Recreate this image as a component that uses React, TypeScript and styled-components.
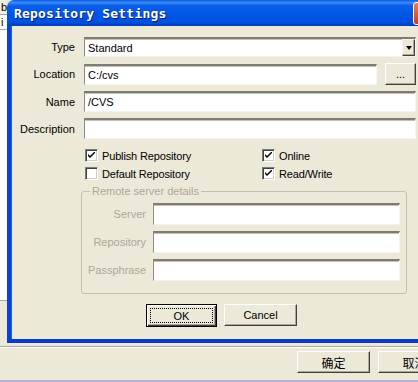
import styled, { createGlobalStyle } from 'styled-components'

const Global = createGlobalStyle`
  html, body { margin: 0; padding: 0; }
  body {
    width: 418px;
    height: 382px;
    overflow: hidden;
    background: #ece9d8;
    font-family: "Liberation Sans", Arial, sans-serif;
    font-size: 11px;
    color: #000;
  }
`

const Screen = styled.div`
  display: flex;
  flex-direction: column;
  width: 418px;
  height: 382px;
  overflow: hidden;
`

const TopArea = styled.div`
  display: flex;
  height: 343px;
  flex-shrink: 0;
`

const LeftStrip = styled.div`
  width: 7px;
  flex-shrink: 0;
  display: flex;
  flex-direction: column;
  overflow: hidden;
  font-size: 11px;
`

const StripLine = styled.div<{ $h: number; $bg: string }>`
  height: ${(p) => p.$h}px;
  background: ${(p) => p.$bg};
  border-bottom: 1px solid #aca899;
  line-height: ${(p) => p.$h}px;
  padding-left: 1px;
  white-space: nowrap;
`

const Dialog = styled.div`
  width: 430px;
  flex-shrink: 0;
  display: flex;
  flex-direction: column;
`

const TitleBar = styled.div`
  height: 26px;
  flex-shrink: 0;
  display: flex;
  align-items: center;
  justify-content: space-between;
  padding: 0 0 0 7px;
  border-radius: 7px 7px 0 0;
  background: linear-gradient(
    to bottom,
    #0a5ce4 0%,
    #3a8cf8 10%,
    #0a5fe8 22%,
    #0055e5 55%,
    #0051e0 85%,
    #003cb4 100%
  );
`

const Title = styled.span`
  font-family: "DejaVu Sans Mono", "Liberation Mono", monospace;
  font-weight: bold;
  font-size: 13px;
  color: #fff;
  letter-spacing: 0.2px;
  text-shadow: 1px 1px 0 #0a1e6e;
  margin-top: 1px;
`

const CloseBtn = styled.div`
  width: 21px;
  height: 21px;
  margin-right: 1px;
  border: 1px solid #fff;
  border-radius: 3px;
  background: linear-gradient(to bottom, #e7805c, #c6401e);
  flex-shrink: 0;
`

const Frame = styled.div`
  flex: 1;
  display: flex;
  flex-direction: column;
  background: #ece9d8;
  border-left: 4px solid #0841d6;
  border-right: 4px solid #0841d6;
  border-bottom: 4px solid #0a3cc8;
  box-shadow: inset 1px 0 0 #1a5ef0;
  padding: 11px 17px 0 0;
`

const FormGrid = styled.div`
  display: grid;
  grid-template-columns: 64px 1fr;
  column-gap: 9px;
  row-gap: 6px;
  align-items: center;
`

const Label = styled.label<{ $disabled?: boolean }>`
  text-align: right;
  white-space: nowrap;
  color: ${(p) => (p.$disabled ? '#aca899' : '#000')};
`

const Field = styled.div<{ $h?: number }>`
  height: ${(p) => p.$h ?? 21}px;
  box-sizing: border-box;
  background: #fff;
  border-style: solid;
  border-width: 2px 1px 1px 1px;
  border-color: #7f7d72 #f7f6f0 #f4f3ee #8e8c80;
  box-shadow: inset 0 1px 0 #c4c1b3;
  display: flex;
  align-items: center;
  padding: 0 3px;
  min-width: 0;
  flex: 1;
`

const SelectBox = styled(Field)`
  padding-right: 0;
  justify-content: space-between;
`

const DropBtn = styled.div`
  width: 13px;
  height: 17px;
  box-sizing: border-box;
  background: #ece9d8;
  border: 1px solid;
  border-color: #f4f3ee #404040 #404040 #f4f3ee;
  box-shadow: inset -1px -1px 0 #aca899;
  display: flex;
  align-items: center;
  justify-content: center;
`

const Arrow = styled.div`
  width: 0;
  height: 0;
  border-left: 3.5px solid transparent;
  border-right: 3.5px solid transparent;
  border-top: 4px solid #000;
`

const Row = styled.div`
  display: flex;
  align-items: center;
  gap: 8px;
`

const Button = styled.button<{ $w: number; $default?: boolean; $cjk?: boolean }>`
  width: ${(p) => p.$w}px;
  height: ${(p) => (p.$default ? 23 : 22)}px;
  box-sizing: border-box;
  padding: 0;
  background: #ece9d8;
  font-family: "Liberation Sans", Arial, "Noto Sans CJK SC", sans-serif;
  font-size: ${(p) => (p.$cjk ? 12 : 11)}px;
  color: #000;
  border: 1px solid;
  border-color: ${(p) => (p.$default ? '#000' : '#fff #404040 #404040 #fff')};
  box-shadow: ${(p) =>
    p.$default
      ? 'inset 1px 1px 0 #fff, inset -1px -1px 0 #404040, inset -2px -2px 0 #aca899'
      : 'inset -1px -1px 0 #aca899'};
  display: flex;
  align-items: center;
  justify-content: center;
  flex-shrink: 0;
`

const FocusRect = styled.span`
  border: 1px dotted #000;
  width: calc(100% - 8px);
  height: 13px;
  display: flex;
  align-items: center;
  justify-content: center;
`

const CheckGrid = styled.div`
  display: grid;
  grid-template-columns: 177px auto;
  row-gap: 5px;
  margin: 10px 0 0 74px;
  letter-spacing: -0.15px;
`

const CheckItem = styled.div`
  display: flex;
  align-items: center;
  gap: 4px;
  height: 13px;
  white-space: nowrap;
`

const Box = styled.span`
  width: 13px;
  height: 13px;
  box-sizing: border-box;
  background: #fff;
  border: 1px solid;
  border-color: #7f7d72 #fff #fff #7f7d72;
  box-shadow: inset 1px 1px 0 #404040, inset -1px -1px 0 #d4d0c8;
  display: flex;
  align-items: center;
  justify-content: center;
  flex-shrink: 0;
`

const GroupBox = styled.fieldset`
  margin: 5px 0 0 70px;
  width: 326px;
  box-sizing: border-box;
  border: 1px solid #c4c1b0;
  border-radius: 3px;
  padding: 5px 6px 12px 6px;
  min-width: 0;
`

const Legend = styled.legend`
  color: #aca899;
  padding: 0 2px;
  margin-left: 2px;
  line-height: 13px;
`

const GroupGrid = styled.div`
  display: grid;
  grid-template-columns: 58px 1fr;
  column-gap: 7px;
  row-gap: 6px;
  align-items: center;
`

const ButtonRow = styled.div`
  display: flex;
  gap: 7px;
  margin: 10px 0 0 135px;
`

const Footer = styled.div`
  flex: 1;
  display: flex;
  flex-direction: column;
  padding-top: 3px;
  border-bottom: 2px solid #b3b3de;
`

const FooterButtons = styled.div`
  flex: 1;
  display: flex;
  gap: 8px;
  padding: 4px 0 0 297px;
  border-top: 1px solid #aca899;
  box-shadow: inset 0 1px 0 #fff;
`

const Check = () => (
  <svg width="7" height="7" viewBox="0 0 7 7">
    <path d="M0 2 L0 4 L2 6 L7 1 L7 -1 L2 4 Z" fill="#000" />
  </svg>
)

function CheckBox({ checked, label }: { checked: boolean; label: string }) {
  return (
    <CheckItem>
      <Box>{checked && <Check />}</Box>
      <span>{label}</span>
    </CheckItem>
  )
}

export default function App() {
  return (
    <Screen>
      <Global />
      <TopArea>
        <LeftStrip>
          <StripLine $h={14} $bg="#f1efe2">b</StripLine>
          <StripLine $h={14} $bg="#fff">i</StripLine>
          <StripLine $h={270} $bg="#fff" />
        </LeftStrip>
        <Dialog>
          <TitleBar>
            <Title>Repository Settings</Title>
            <CloseBtn />
          </TitleBar>
          <Frame>
            <FormGrid>
              <Label>Type</Label>
              <SelectBox $h={20}>
                <span>Standard</span>
                <DropBtn>
                  <Arrow />
                </DropBtn>
              </SelectBox>
              <Label>Location</Label>
              <Row>
                <Field>C:/cvs</Field>
                <Button $w={31}>...</Button>
              </Row>
              <Label>Name</Label>
              <Field>/CVS</Field>
              <Label>Description</Label>
              <Field />
            </FormGrid>

            <CheckGrid>
              <CheckBox checked label="Publish Repository" />
              <CheckBox checked label="Online" />
              <CheckBox checked={false} label="Default Repository" />
              <CheckBox checked label="Read/Write" />
            </CheckGrid>

            <GroupBox>
              <Legend>Remote server details</Legend>
              <GroupGrid>
                <Label $disabled>Server</Label>
                <Field $h={22} />
                <Label $disabled>Repository</Label>
                <Field $h={22} />
                <Label $disabled>Passphrase</Label>
                <Field $h={22} />
              </GroupGrid>
            </GroupBox>

            <ButtonRow>
              <Button $w={71} $default>
                <FocusRect>OK</FocusRect>
              </Button>
              <Button $w={73}>Cancel</Button>
            </ButtonRow>
          </Frame>
        </Dialog>
      </TopArea>
      <Footer>
        <FooterButtons>
          <Button $w={73} $cjk>确定</Button>
          <Button $w={73} $cjk>取消</Button>
        </FooterButtons>
      </Footer>
    </Screen>
  )
}
